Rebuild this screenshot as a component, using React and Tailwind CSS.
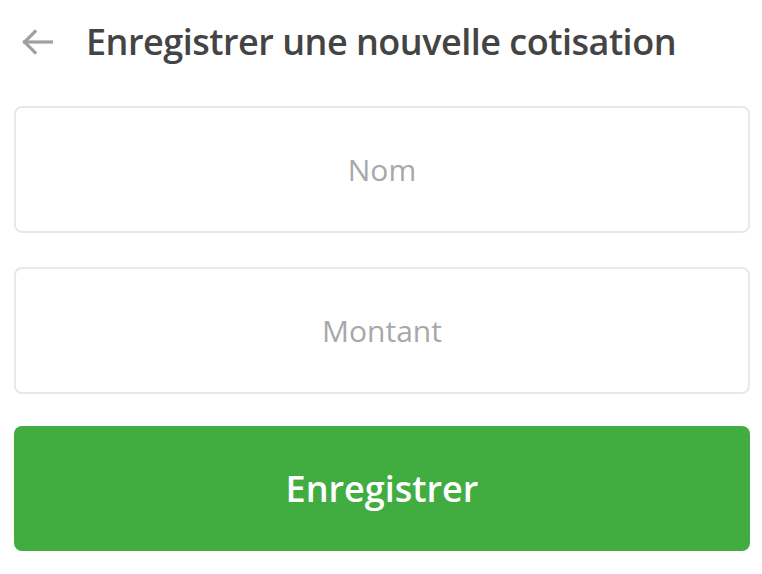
import React, { useState } from "react";

export default function App() {
  const [nom, setNom] = useState("");
  const [montant, setMontant] = useState("");

  return (
    <div className="min-h-screen w-full bg-white pl-[14px] pr-[12px]" style={{ fontFamily: '"Open Sans", "Noto Sans", sans-serif' }}>
      {/* Header */}
      <div className="flex items-center h-[84px]">
        <button className="w-[31px] h-[26px] ml-[8px] flex items-center justify-center text-[#a0a0a0]">
          <svg width="31" height="26" viewBox="0 0 31 26" fill="none" stroke="currentColor" strokeWidth="3.2" strokeLinecap="square">
            <path d="M2.5 13 H29.5" />
            <path d="M13 2.5 L2.5 13 L13 23.5" />
          </svg>
        </button>
        <h1 className="ml-[33px] text-[36px] font-semibold text-[#444444] leading-none tracking-[-0.5px]">
          Enregistrer une nouvelle cotisation
        </h1>
      </div>

      {/* Form */}
      <div className="mt-[22px] flex flex-col">
        <input
          value={nom}
          onChange={(e) => setNom(e.target.value)}
          placeholder="Nom"
          className="h-[127px] w-full rounded-[8px] border-2 border-[#e8e8e8] bg-white text-center text-[30px] text-[#444] placeholder:text-[#a8a8a8] outline-none"
        />
        <input
          value={montant}
          onChange={(e) => setMontant(e.target.value)}
          placeholder="Montant"
          className="mt-[34px] h-[127px] w-full rounded-[8px] border-2 border-[#e8e8e8] bg-white text-center text-[30px] text-[#444] placeholder:text-[#a8a8a8] outline-none"
        />
        <button className="mt-[32px] h-[125px] w-full rounded-[8px] bg-[#41ad41] text-white text-[36px] font-semibold">
          Enregistrer
        </button>
      </div>
    </div>
  );
}
